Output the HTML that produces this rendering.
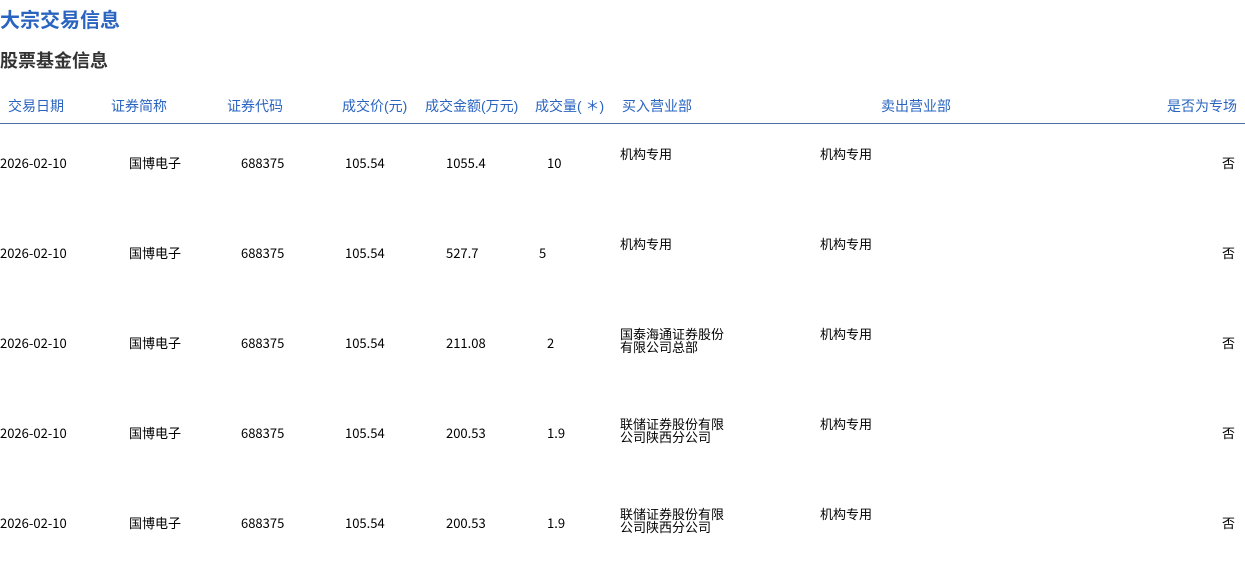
<!DOCTYPE html><html><head><meta charset="utf-8"><style>
body{margin:0;width:1245px;height:574px;background:#fff;position:relative;font-family:"Liberation Sans","Noto Sans CJK SC",sans-serif;overflow:hidden}
div{position:absolute;white-space:nowrap}
.t{left:0;top:4px;font-size:20px;font-weight:bold;color:#2a64c0}
.s{left:0;top:48px;font-size:18px;font-weight:bold;color:#333;font-family:"Noto Sans CJK SC",sans-serif;line-height:24px}
.h{top:97px;font-size:14px;color:#2a64c0;line-height:18px}
.line{left:0;top:123px;width:1245px;height:1px;background:#4a6fa5}
.c{font-size:13px;color:#000;line-height:13px;font-family:"Noto Sans CJK SC",sans-serif;margin-top:-1px}
</style></head><body>
<div class="t">大宗交易信息</div>
<div class="s">股票基金信息</div>
<div class="h" style="left:8px">交易日期</div>
<div class="h" style="left:111px">证券简称</div>
<div class="h" style="left:227px">证券代码</div>
<div class="h" style="left:342px">成交价(元)</div>
<div class="h" style="left:425px">成交金额(万元)</div>
<div class="h" style="left:535px">成交量( ＊)</div>
<div class="h" style="left:622px">买入营业部</div>
<div class="h" style="left:881px">卖出营业部</div>
<div class="h" style="left:1167px">是否为专场</div>
<div class="line"></div>

<div class="c" style="left:0;top:157px">2026-02-10</div><div class="c" style="left:129px;top:157px">国博电子</div><div class="c" style="left:241px;top:157px">688375</div><div class="c" style="left:345px;top:157px">105.54</div><div class="c" style="left:446px;top:157px">1055.4</div><div class="c" style="left:547px;top:157px">10</div><div class="c" style="left:620px;top:148px">机构专用</div><div class="c" style="left:820px;top:148px">机构专用</div><div class="c" style="left:1222px;top:157px">否</div>

<div class="c" style="left:0;top:247px">2026-02-10</div><div class="c" style="left:129px;top:247px">国博电子</div><div class="c" style="left:241px;top:247px">688375</div><div class="c" style="left:345px;top:247px">105.54</div><div class="c" style="left:446px;top:247px">527.7</div><div class="c" style="left:539px;top:247px">5</div><div class="c" style="left:620px;top:238px">机构专用</div><div class="c" style="left:820px;top:238px">机构专用</div><div class="c" style="left:1222px;top:247px">否</div>

<div class="c" style="left:0;top:337px">2026-02-10</div><div class="c" style="left:129px;top:337px">国博电子</div><div class="c" style="left:241px;top:337px">688375</div><div class="c" style="left:345px;top:337px">105.54</div><div class="c" style="left:446px;top:337px">211.08</div><div class="c" style="left:547px;top:337px">2</div><div class="c" style="left:620px;top:328px">国泰海通证券股份<br>有限公司总部</div><div class="c" style="left:820px;top:328px">机构专用</div><div class="c" style="left:1222px;top:337px">否</div>

<div class="c" style="left:0;top:427px">2026-02-10</div><div class="c" style="left:129px;top:427px">国博电子</div><div class="c" style="left:241px;top:427px">688375</div><div class="c" style="left:345px;top:427px">105.54</div><div class="c" style="left:446px;top:427px">200.53</div><div class="c" style="left:547px;top:427px">1.9</div><div class="c" style="left:620px;top:418px">联储证券股份有限<br>公司陕西分公司</div><div class="c" style="left:820px;top:418px">机构专用</div><div class="c" style="left:1222px;top:427px">否</div>

<div class="c" style="left:0;top:517px">2026-02-10</div><div class="c" style="left:129px;top:517px">国博电子</div><div class="c" style="left:241px;top:517px">688375</div><div class="c" style="left:345px;top:517px">105.54</div><div class="c" style="left:446px;top:517px">200.53</div><div class="c" style="left:547px;top:517px">1.9</div><div class="c" style="left:620px;top:508px">联储证券股份有限<br>公司陕西分公司</div><div class="c" style="left:820px;top:508px">机构专用</div><div class="c" style="left:1222px;top:517px">否</div>
</body></html>
